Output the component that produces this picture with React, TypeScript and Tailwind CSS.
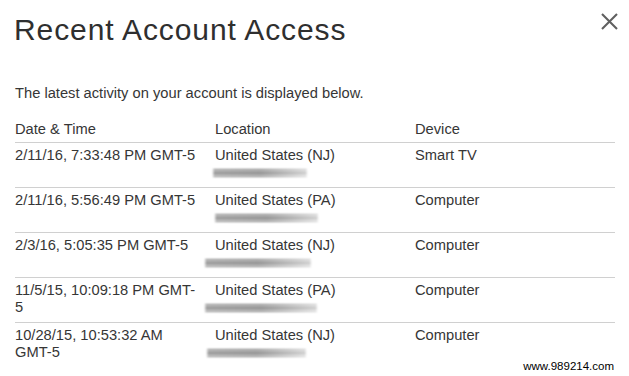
const rows = [
  { date: '2/11/16, 7:33:48 PM GMT-5', location: 'United States (NJ)', device: 'Smart TV', blur: { left: -2, width: 94 } },
  { date: '2/11/16, 5:56:49 PM GMT-5', location: 'United States (PA)', device: 'Computer', blur: { left: 0, width: 103 } },
  { date: '2/3/16, 5:05:35 PM GMT-5', location: 'United States (NJ)', device: 'Computer', blur: { left: -10, width: 106 } },
  { date: '11/5/15, 10:09:18 PM GMT-5', location: 'United States (PA)', device: 'Computer', blur: { left: -10, width: 112 } },
  { date: '10/28/15, 10:53:32 AM GMT-5', location: 'United States (NJ)', device: 'Computer', blur: { left: -8, width: 99 } },
];

// smeared-out second line under the location (redacted in the screenshot)
const Redacted = ({ left, width }: { left: number; width: number }) => (
  <div className="mt-[5px] flex flex-col gap-[1px] blur-[1px]" style={{ marginLeft: left, width }}>
    <div className="h-[2px] rounded-full bg-gradient-to-r from-[#909090] via-[#848484] to-[#d0d0d0]" />
    <div className="h-[2px] rounded-full bg-gradient-to-r from-[#707070] via-[#666666] to-[#bcbcbc]" />
    <div className="h-[2px] rounded-full bg-gradient-to-r from-[#9a9a9a] via-[#8c8c8c] to-[#d8d8d8]" />
  </div>
);

export default function App() {
  return (
    <div className="relative h-[376px] w-[629px] overflow-hidden bg-white font-['Liberation_Sans',Arial,sans-serif] text-[#363636]">
      <div className="flex items-start justify-between pt-[13px] pl-[14px] pr-[11px]">
        <h1 className="text-[30px] leading-[34px] tracking-[0.9px] text-[#2f2f2f]">Recent Account Access</h1>
        <button className="text-[#606060]">
          <svg width="17" height="17" viewBox="0 0 17 17" fill="none" stroke="currentColor" strokeWidth="2.1" strokeLinecap="butt">
            <path d="M1 1L16 16M16 1L1 16" />
          </svg>
        </button>
      </div>

      <div className="px-[15px] pr-[14px] text-[14.7px] leading-[17px]">
        <p className="mt-[38px]">The latest activity on your account is displayed below.</p>

        <div className="mt-[19px] grid h-[22px] grid-cols-[200px_200px_1fr] border-b border-[#d0d0d0]">
          <div>Date &amp; Time</div>
          <div>Location</div>
          <div>Device</div>
        </div>

        {rows.map((r, i) => (
          <div
            key={i}
            className={`grid h-[45px] grid-cols-[200px_200px_1fr] pt-[4px] ${i < rows.length - 1 ? 'border-b border-[#d0d0d0]' : ''}`}
          >
            <div className="pr-[13px]">{r.date}</div>
            <div>
              <div>{r.location}</div>
              <Redacted left={r.blur.left} width={r.blur.width} />
            </div>
            <div>{r.device}</div>
          </div>
        ))}
      </div>

      <div className="absolute right-[15px] top-[360px] text-[11.5px] leading-[13px] text-black">www.989214.com</div>
    </div>
  );
}
